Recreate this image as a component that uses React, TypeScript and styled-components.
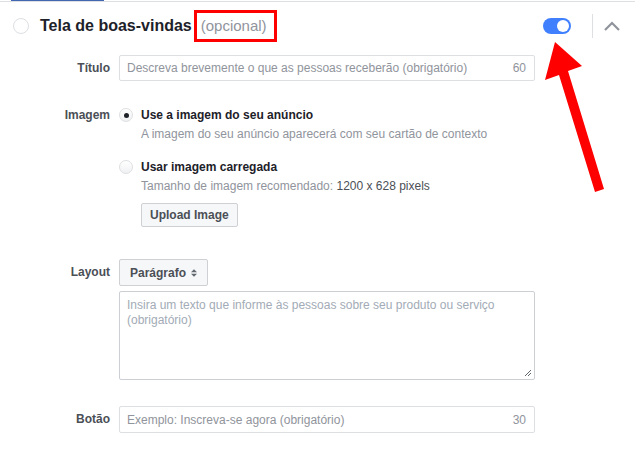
import styled, { createGlobalStyle } from "styled-components";

const Global = createGlobalStyle`
  html, body { margin: 0; padding: 0; background: #fff; }
  body { font-family: "Liberation Sans", Arial, sans-serif; color: #1d2129; }
`;

export default function App() {
    return (
        <>
            <Global />
            <PageStl>
                <TopRuleStl><TopActiveStl /></TopRuleStl>
                <HeaderStl>
                    <HeaderRadioStl />
                    <TitleStl>Tela de boas-vindas</TitleStl>
                    <OptionalStl>(opcional)</OptionalStl>
                    <HeaderActionsStl>
                        <ToggleStl><ToggleKnobStl /></ToggleStl>
                        <SeparatorStl />
                        <svg width="18" height="10" viewBox="0 0 18 10">
                            <polyline points="2,9 9,2 16,9" fill="none" stroke="#90949c" strokeWidth="2.2" />
                        </svg>
                    </HeaderActionsStl>
                </HeaderStl>

                <FormStl>
                    <RowStl $top={5}>
                        <LabelStl $h={26}>Título</LabelStl>
                        <InputStl>
                            <PlaceholderStl>Descreva brevemente o que as pessoas receberão (obrigatório)</PlaceholderStl>
                            <CounterStl>60</CounterStl>
                        </InputStl>
                    </RowStl>

                    <RowStl $top={26}>
                        <LabelStl $h={16}>Imagem</LabelStl>
                        <OptionsStl>
                            <OptionStl>
                                <OptionLineStl>
                                    <RadioStl $checked />
                                    <OptionTitleStl>Use a imagem do seu anúncio</OptionTitleStl>
                                </OptionLineStl>
                                <HintStl>A imagem do seu anúncio aparecerá com seu cartão de contexto</HintStl>
                            </OptionStl>
                            <OptionStl>
                                <OptionLineStl>
                                    <RadioStl />
                                    <OptionTitleStl>Usar imagem carregada</OptionTitleStl>
                                </OptionLineStl>
                                <HintStl>Tamanho de imagem recomendado: <strong>1200 x 628 pixels</strong></HintStl>
                                <ButtonStl>Upload Image</ButtonStl>
                            </OptionStl>
                        </OptionsStl>
                    </RowStl>

                    <RowStl $top={32}>
                        <LabelStl $h={27}>Layout</LabelStl>
                        <LayoutColStl>
                            <SelectStl>
                                Parágrafo
                                <svg width="6" height="8" viewBox="0 0 6 8">
                                    <polygon points="0,3.2 3,0.2 6,3.2" fill="#606770" />
                                    <polygon points="0,4.8 3,7.8 6,4.8" fill="#606770" />
                                </svg>
                            </SelectStl>
                            <TextareaStl>
                                <TextareaHintStl>Insira um texto que informe às pessoas sobre seu produto ou serviço (obrigatório)</TextareaHintStl>
                                <svg width="8" height="8" viewBox="0 0 8 8">
                                    <path d="M1 7 L7 1 M4 7 L7 4" stroke="#606770" strokeWidth="1" />
                                </svg>
                            </TextareaStl>
                        </LayoutColStl>
                    </RowStl>

                    <RowStl $top={26}>
                        <LabelStl $h={27}>Botão</LabelStl>
                        <InputStl $h={27}>
                            <PlaceholderStl>Exemplo: Inscreva-se agora (obrigatório)</PlaceholderStl>
                            <CounterStl>30</CounterStl>
                        </InputStl>
                    </RowStl>
                </FormStl>

                <ArrowSvgStl width="70" height="160" viewBox="0 0 70 160">
                    <polygon points="15,2 5,40 19,35 55,152 64,149 28,31 42,26" fill="#ff0000" />
                </ArrowSvgStl>
            </PageStl>
        </>
    );
}

const PageStl = styled.div`
    position: relative;
    width: 635px;
    height: 465px;
    overflow: hidden;
`;

const TopRuleStl = styled.div`
    height: 1px;
    border-bottom: 1px solid #dddfe2;
`;

const TopActiveStl = styled.div`
    margin-left: 11px;
    width: 93px;
    height: 1px;
    background: #4267b2;
`;

const HeaderStl = styled.div`
    display: flex;
    align-items: center;
    height: 48px;
    padding-left: 13px;
`;

const HeaderRadioStl = styled.span`
    width: 14px;
    height: 14px;
    border-radius: 50%;
    border: 1px solid #dddfe2;
    margin-right: 11px;
`;

const TitleStl = styled.span`
    font-size: 16px;
    font-weight: bold;
    color: #1d2129;
`;

const OptionalStl = styled.span`
    box-sizing: border-box;
    height: 32px;
    margin-left: 2px;
    padding: 0 7px 0 4px;
    border: 3px solid #ff0000;
    font-size: 15px;
    line-height: 26px;
    color: #90949c;
`;

const HeaderActionsStl = styled.div`
    margin-left: auto;
    margin-right: 14px;
    display: flex;
    align-items: center;
`;

const ToggleStl = styled.span`
    box-sizing: border-box;
    display: flex;
    align-items: center;
    justify-content: flex-end;
    width: 28px;
    height: 16px;
    padding: 2px;
    border-radius: 8px;
    background: #4080ff;
`;

const ToggleKnobStl = styled.span`
    width: 12px;
    height: 12px;
    border-radius: 50%;
    background: #fff;
`;

const SeparatorStl = styled.span`
    width: 1px;
    height: 24px;
    background: #dddfe2;
    margin: 0 10px 0 21px;
`;

const FormStl = styled.div`
    display: flex;
    flex-direction: column;
`;

const RowStl = styled.div<{ $top: number }>`
    display: grid;
    grid-template-columns: 110px 416px;
    column-gap: 9px;
    align-items: start;
    margin-top: ${(p) => p.$top}px;
`;

const LabelStl = styled.div<{ $h: number }>`
    text-align: right;
    font-size: 12px;
    font-weight: bold;
    color: #4b4f56;
    line-height: ${(p) => p.$h}px;
`;

const InputStl = styled.div<{ $h?: number }>`
    box-sizing: border-box;
    display: flex;
    align-items: center;
    justify-content: space-between;
    height: ${(p) => p.$h ?? 26}px;
    padding: 0 8px 0 7px;
    border: 1px solid #dddfe2;
    border-radius: 2px;
    font-size: 12px;
`;

const PlaceholderStl = styled.span`
    color: #90949c;
`;

const TextareaHintStl = styled.span`
    color: #a2abb6;
`;

const CounterStl = styled.span`
    color: #90949c;
`;

const OptionsStl = styled.div`
    display: flex;
    flex-direction: column;
    gap: 17px;
`;

const OptionStl = styled.div`
    display: flex;
    flex-direction: column;
`;

const OptionLineStl = styled.div`
    display: flex;
    align-items: center;
    height: 16px;
`;

const RadioStl = styled.span<{ $checked?: boolean }>`
    box-sizing: border-box;
    display: flex;
    align-items: center;
    justify-content: center;
    width: 14px;
    height: 14px;
    margin-right: 8px;
    border-radius: 50%;
    border: 1px solid #dddfe2;
    background: linear-gradient(#fff, #f0f1f3);

    &::after {
        content: "";
        display: ${(p) => (p.$checked ? "block" : "none")};
        width: 5px;
        height: 5px;
        border-radius: 50%;
        background: #1d2129;
    }
`;

const OptionTitleStl = styled.span`
    font-size: 12px;
    font-weight: bold;
    color: #1d2129;
`;

const HintStl = styled.div`
    margin-top: 3px;
    margin-left: 22px;
    font-size: 12px;
    line-height: 16px;
    color: #90949c;

    strong {
        font-weight: normal;
        color: #4b4f56;
    }
`;

const ButtonStl = styled.div`
    box-sizing: border-box;
    align-self: flex-start;
    margin-top: 9px;
    margin-left: 22px;
    height: 24px;
    padding: 0 8px;
    line-height: 22px;
    border: 1px solid #ced0d4;
    border-radius: 2px;
    background: #f6f7f9;
    font-size: 12px;
    font-weight: bold;
    color: #4b4f56;
`;

const LayoutColStl = styled.div`
    display: flex;
    flex-direction: column;
    gap: 5px;
`;

const SelectStl = styled.div`
    box-sizing: border-box;
    align-self: flex-start;
    display: flex;
    align-items: center;
    gap: 5px;
    white-space: nowrap;
    height: 27px;
    padding: 0 10px;
    border: 1px solid #ced0d4;
    border-radius: 2px;
    background: #f6f7f9;
    font-size: 12px;
    font-weight: bold;
    color: #4b4f56;
`;

const TextareaStl = styled.div`
    box-sizing: border-box;
    position: relative;
    height: 89px;
    padding: 6px 7px;
    border: 1px solid #ccd0d5;
    border-radius: 2px;
    font-size: 12px;
    line-height: 15px;

    svg {
        position: absolute;
        right: 2px;
        bottom: 2px;
    }
`;

const ArrowSvgStl = styled.svg`
    position: absolute;
    left: 540px;
    top: 40px;
`;
